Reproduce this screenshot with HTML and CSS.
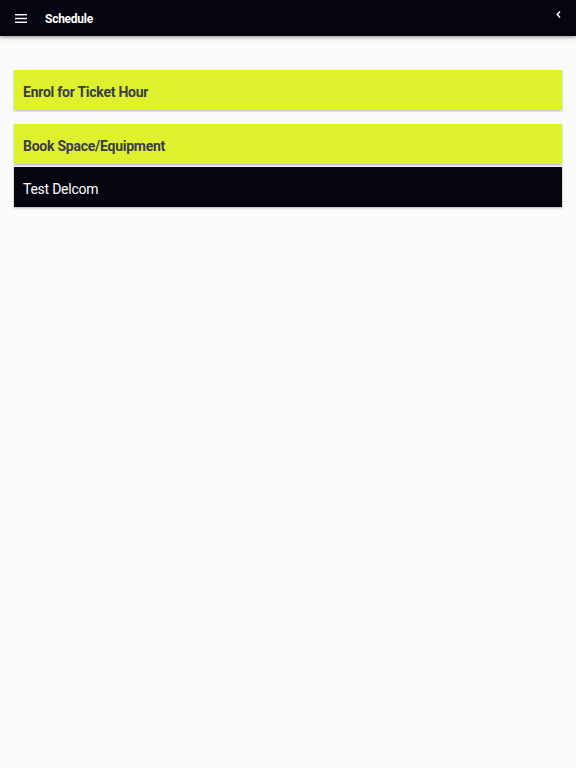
FILE: index.html
```html
<!DOCTYPE html>
<html lang="en">
<head>
    <meta charset="UTF-8">
    <meta name="viewport" content="width=device-width, initial-scale=1.0">
    <title>Schedule</title>
    <link rel="stylesheet" href="styles.css">
</head>
<body>
    <header class="toolbar">
        <button class="menu-button" aria-label="Menu">
            <svg width="12" height="9" viewBox="0 0 12 9">
                <rect x="0" y="0" width="12" height="1.4" fill="#fff"/>
                <rect x="0" y="3.8" width="12" height="1.4" fill="#fff"/>
                <rect x="0" y="7.6" width="12" height="1.4" fill="#fff"/>
            </svg>
        </button>
        <h1 class="title">Schedule</h1>
        <button class="back-button" aria-label="Back">
            <svg width="5" height="7" viewBox="0 0 5 7">
                <path d="M4 0.5 L1.2 3.5 L4 6.5" fill="none" stroke="#fff" stroke-width="1.4"/>
            </svg>
        </button>
    </header>

    <main class="content">
        <div class="item highlight spaced">Enrol for Ticket Hour</div>
        <div class="item highlight">Book Space/Equipment</div>
        <div class="item dark">Test Delcom</div>
    </main>
</body>
</html>
```

FILE: styles.css
```css
body {
    margin: 0;
    background: #fafafa;
    font-family: Roboto, "Liberation Sans", sans-serif;
    height: 100vh;
}

.toolbar {
    height: 36px;
    background: #05050f;
    display: flex;
    align-items: center;
    box-shadow: 0 1px 4px rgba(0, 0, 0, 0.45);
    position: relative;
}

.menu-button,
.back-button {
    background: none;
    border: none;
    padding: 0;
    display: flex;
    align-items: center;
    cursor: pointer;
}

.menu-button {
    margin-left: 15px;
    margin-top: 1px;
}

.title {
    margin: 1px 0 0 18px;
    color: #fff;
    font-size: 12px;
    font-weight: 700;
    letter-spacing: -0.25px;
    flex: 1;
}

.back-button {
    margin-right: 15px;
    margin-top: -7px;
}

.content {
    padding: 34px 14px 0;
    display: flex;
    flex-direction: column;
    gap: 3px;
}

.item {
    height: 40px;
    box-sizing: border-box;
    display: flex;
    align-items: center;
    padding: 4px 0 0 9px;
    font-size: 14px;
    letter-spacing: -0.25px;
    box-shadow: 0 1px 2px rgba(0, 0, 0, 0.3);
}

.item.spaced {
    margin-bottom: 11px;
}

.highlight {
    background: #dff02f;
    color: #3b3b4b;
    font-weight: 700;
}

.dark {
    background: #05050f;
    color: #fff;
}
```
